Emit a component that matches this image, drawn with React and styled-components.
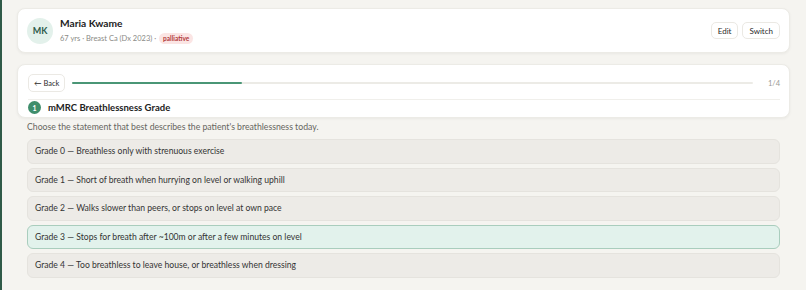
import React, { useState } from "react";
import styled, { createGlobalStyle } from "styled-components";

const GlobalStyle = createGlobalStyle`
  html, body {
    margin: 0;
    padding: 0;
    background: #f5f4f0;
  }
  body {
    font-family: Lato, "Liberation Sans", sans-serif;
    color: #2b2b2b;
  }
`;

const Page = styled.div`
  min-height: 290px;
  box-sizing: border-box;
  border-left: 2px solid #2f5a48;
  padding: 8px 16px 12px 15px;
  display: flex;
  flex-direction: column;
`;

const Card = styled.div`
  background: #fff;
  border: 1px solid #ecebe6;
  border-radius: 8px;
  box-shadow: 0 1px 3px rgba(0, 0, 0, 0.05);
  box-sizing: border-box;
`;

const PatientCard = styled(Card)`
  height: 45px;
  padding: 0 9px;
  display: flex;
  align-items: center;
  gap: 7px;
`;

const Avatar = styled.div`
  width: 26px;
  height: 26px;
  border-radius: 50%;
  background: #e3f1eb;
  color: #2f5e4b;
  font-size: 9px;
  font-weight: 700;
  display: flex;
  align-items: center;
  justify-content: center;
`;

const PatientInfo = styled.div`
  display: flex;
  flex-direction: column;
  gap: 4px;
  flex: 1;
`;

const Name = styled.div`
  font-size: 10.2px;
  font-weight: 700;
  color: #222;
`;

const Meta = styled.div`
  display: flex;
  align-items: center;
  gap: 3px;
  font-size: 7.5px;
  color: #8a8a86;
`;

const Badge = styled.span`
  background: #fbe5e4;
  color: #b23a3a;
  font-size: 6.5px;
  font-weight: 700;
  padding: 2px 4px;
  border-radius: 8px;
`;

const Actions = styled.div`
  display: flex;
  gap: 4px;
`;

const SmallButton = styled.button`
  font-family: inherit;
  font-size: 8px;
  color: #2b2b2b;
  background: #fff;
  border: 1px solid #ebe9e4;
  border-radius: 5px;
  height: 17px;
  padding: 0 6px;
  cursor: pointer;
`;

const StepCard = styled(Card)`
  margin-top: 11px;
  padding: 9px 9px 3px 10px;
  display: flex;
  flex-direction: column;
`;

const ProgressRow = styled.div`
  display: flex;
  align-items: center;
  gap: 7px;
  height: 18px;
`;

const BackButton = styled(SmallButton)`
  height: 18px;
  font-size: 7.5px;
  padding: 0 5px;
`;

const Track = styled.div`
  flex: 1;
  height: 2px;
  background: #ecebe6;
  border-radius: 1px;
  margin-right: 8px;
`;

const Fill = styled.div`
  height: 100%;
  background: #4a9676;
  border-radius: 1px;
`;

const Count = styled.span`
  font-size: 7.5px;
  color: #9a9a96;
`;

const StepHeading = styled.div`
  margin-top: 7px;
  border-top: 1px solid #f0efeb;
  padding-top: 1px;
  display: flex;
  align-items: center;
  gap: 7px;
`;

const StepNumber = styled.div`
  width: 13px;
  height: 13px;
  border-radius: 50%;
  background: #3f8e6c;
  color: #fff;
  font-size: 7px;
  font-weight: 700;
  display: flex;
  align-items: center;
  justify-content: center;
`;

const StepTitle = styled.div`
  font-size: 9.5px;
  line-height: 13px;
  font-weight: 700;
  color: #222;
`;

const Question = styled.div`
  padding: 0 10px;
`;

const Prompt = styled.p`
  margin: 3px 0 7px;
  font-size: 8.7px;
  line-height: 11px;
  color: #666660;
`;

const Options = styled.div`
  display: flex;
  flex-direction: column;
  gap: 4px;
`;

const Option = styled.button`
  font-family: inherit;
  text-align: left;
  height: 24.5px;
  padding: 0 7px;
  font-size: 8.6px;
  color: #333;
  background: ${(p) => (p.$selected ? "#e2f2ec" : "#edebe7")};
  border: 1px solid ${(p) => (p.$selected ? "#a9cdbd" : "#e5e3de")};
  border-radius: 6px;
  cursor: pointer;
`;

const grades = [
  "Grade 0 — Breathless only with strenuous exercise",
  "Grade 1 — Short of breath when hurrying on level or walking uphill",
  "Grade 2 — Walks slower than peers, or stops on level at own pace",
  "Grade 3 — Stops for breath after ~100m or after a few minutes on level",
  "Grade 4 — Too breathless to leave house, or breathless when dressing",
];

const App = () => {
  const [selected, setSelected] = useState(3);
  const step = 1;
  const total = 4;

  return (
    <>
      <GlobalStyle />
      <Page>
        <PatientCard>
          <Avatar>MK</Avatar>
          <PatientInfo>
            <Name>Maria Kwame</Name>
            <Meta>
              <span>67 yrs · Breast Ca (Dx 2023) ·</span>
              <Badge>palliative</Badge>
            </Meta>
          </PatientInfo>
          <Actions>
            <SmallButton>Edit</SmallButton>
            <SmallButton>Switch</SmallButton>
          </Actions>
        </PatientCard>

        <StepCard>
          <ProgressRow>
            <BackButton>← Back</BackButton>
            <Track>
              <Fill style={{ width: `${(step / total) * 100}%` }} />
            </Track>
            <Count>
              {step}/{total}
            </Count>
          </ProgressRow>
          <StepHeading>
            <StepNumber>1</StepNumber>
            <StepTitle>mMRC Breathlessness Grade</StepTitle>
          </StepHeading>
        </StepCard>

        <Question>
          <Prompt>
            Choose the statement that best describes the patient's breathlessness today.
          </Prompt>
          <Options>
            {grades.map((g, i) => (
              <Option key={i} $selected={i === selected} onClick={() => setSelected(i)}>
                {g}
              </Option>
            ))}
          </Options>
        </Question>
      </Page>
    </>
  );
};

export default App;
